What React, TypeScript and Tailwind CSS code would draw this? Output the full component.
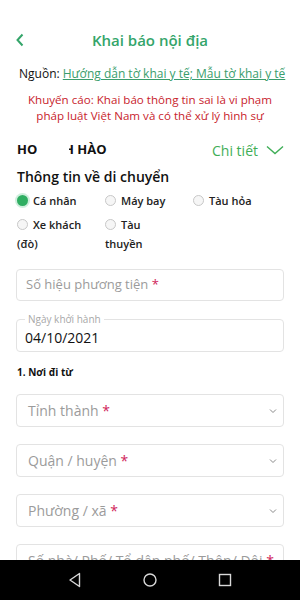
import React from 'react';

const font = { fontFamily: '"Open Sans", "Noto Sans", sans-serif' };

function Radio({ checked }: { checked?: boolean }) {
  return (
    <span
      className={`inline-block align-[-1px] w-[11px] h-[11px] rounded-full mr-[5px] ${
        checked ? 'bg-[#2fae62] ring-[2px] ring-[#cfeedd]' : 'border border-[#c8c8c8] bg-[#f6f6f6]'
      }`}
    />
  );
}

function Option({ label, checked }: { label: string; checked?: boolean }) {
  return (
    <div className="w-[66px] text-[11px] leading-[19px] font-semibold text-[#222]">
      <Radio checked={checked} />
      {label}
    </div>
  );
}

function Field({ label, select }: { label: string; select?: boolean }) {
  return (
    <div className="mx-[16px] h-[33px] border border-[#e3e3e3] rounded-[4px] flex items-center justify-between pl-[11px] pr-[6px] bg-white">
      <span className="text-[14px] text-[#9b9b9b] whitespace-nowrap">
        {label} <span className="text-[#d0245a]">*</span>
      </span>
      {select && (
        <svg width="8" height="6" viewBox="0 0 8 6" fill="none">
          <path d="M1 1.5 L4 4.5 L7 1.5" stroke="#8a8a8a" strokeWidth="1" />
        </svg>
      )}
    </div>
  );
}

export default function App() {
  return (
    <div className="w-[300px] h-[600px] flex flex-col bg-white overflow-hidden" style={font}>
      <div className="flex-1 overflow-hidden">
        {/* header */}
        <div className="mt-[24px] h-[32px] relative flex items-center justify-center">
          <svg className="absolute left-[15px] top-[9px]" width="10" height="14" viewBox="0 0 10 14" fill="none">
            <path d="M7.5 1.5 L2.5 7 L7.5 12.5" stroke="#34a56a" strokeWidth="2" />
          </svg>
          <h1 className="text-[15px] font-semibold text-[#34a56a]">Khai báo nội địa</h1>
        </div>

        <div className="mt-[10px] pl-[19px] pr-[20px] text-[12px] leading-[16px] whitespace-nowrap overflow-hidden">
          <span className="text-[#111] font-medium">Nguồn: </span>
          <span className="text-[#3a9d6c] underline">Hướng dẫn tờ khai y tế; Mẫu tờ khai y tế</span>
        </div>

        <p className="mt-[10px] px-[24px] text-center text-[11.6px] leading-[16px] text-[#c8242d]">
          Khuyến cáo: Khai báo thông tin sai là vi phạm pháp luật Việt Nam và có thể xử lý hình sự
        </p>

        <div className="mt-[14px] h-[24px] pl-[17px] pr-[16px] flex items-center justify-between">
          <div className="text-[13px] font-bold text-[#111]">
            <span className="inline-block w-[20px] overflow-hidden align-bottom whitespace-nowrap">HO</span>
            <span className="inline-block ml-[32px] w-[40px] overflow-hidden align-bottom whitespace-nowrap">
              <span className="ml-[-5px]">H HÀO</span>
            </span>
          </div>
          <div className="flex items-center gap-[8px]">
            <span className="text-[14px] text-[#3fae57]">Chi tiết</span>
            <svg width="18" height="10" viewBox="0 0 18 10" fill="none">
              <path d="M1 1.5 L9 8.5 L17 1.5" stroke="#3fae57" strokeWidth="1.4" />
            </svg>
          </div>
        </div>

        <h2 className="mt-[5px] pl-[17px] text-[14px] leading-[20px] font-semibold text-[#111]">
          Thông tin về di chuyển
        </h2>

        <div className="mt-[4px] pl-[17px] grid grid-cols-[88px_88px_88px] gap-y-[5px]">
          <Option label="Cá nhân" checked />
          <Option label="Máy bay" />
          <Option label="Tàu hỏa" />
          <Option label="Xe khách (đò)" />
          <Option label="Tàu thuyền" />
        </div>

        <div className="mt-[16px]">
          <div className="mx-[16px] h-[32px] border border-[#e3e3e3] rounded-[4px] flex items-center pl-[9px]">
            <span className="text-[13px] text-[#9b9b9b]">
              Số hiệu phương tiện <span className="text-[#d0245a]">*</span>
            </span>
          </div>
        </div>

        <div className="mt-[18px] mx-[16px] h-[33px] border border-[#e3e3e3] rounded-[4px] relative flex items-center pl-[8px]">
          <span className="absolute left-[8px] top-[-8px] px-[3px] bg-white text-[10px] leading-[14px] text-[#a8a8a8]">
            Ngày khởi hành
          </span>
          <span className="mt-[3px] text-[14px] text-[#111]">04/10/2021</span>
        </div>

        <div className="mt-[13px] pl-[17px] text-[10px] leading-[14px] font-bold text-[#111]">1. Nơi đi từ</div>

        <div className="mt-[15px] flex flex-col gap-[17px]">
          <Field label="Tỉnh thành" select />
          <Field label="Quận / huyện" select />
          <Field label="Phường / xã" select />
          <Field label="Số nhà/ Phố/ Tổ dân phố/ Thôn/ Đội" />
        </div>
      </div>

      {/* android nav bar */}
      <div className="h-[40px] bg-black flex items-center justify-center gap-[59px] shrink-0">
        <svg width="16" height="16" viewBox="0 0 16 16" fill="none">
          <path d="M12.5 1.5 L3 8 L12.5 14.5 Z" stroke="#d8d8d8" strokeWidth="1.4" strokeLinejoin="round" />
        </svg>
        <svg width="16" height="16" viewBox="0 0 16 16" fill="none">
          <circle cx="8" cy="8" r="6" stroke="#d8d8d8" strokeWidth="1.4" />
        </svg>
        <svg width="16" height="16" viewBox="0 0 16 16" fill="none">
          <rect x="2.5" y="2.5" width="11" height="11" stroke="#d8d8d8" strokeWidth="1.4" />
        </svg>
      </div>
    </div>
  );
}
